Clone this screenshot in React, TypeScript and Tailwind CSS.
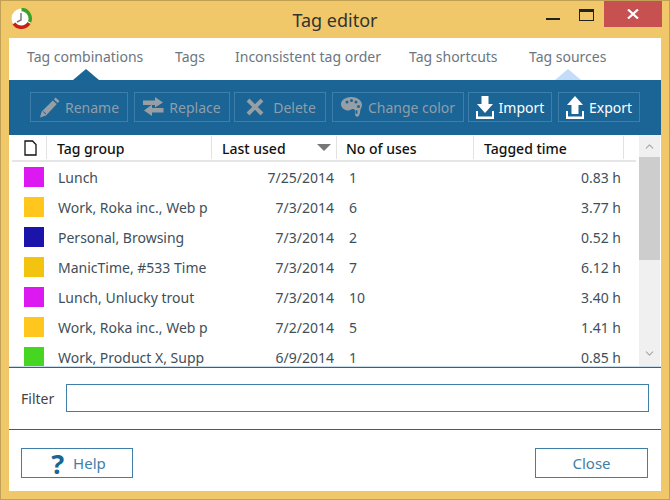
import { ReactNode } from 'react';
import { ChevronUp, ChevronDown } from 'lucide-react';

const rows = [
  { color: 'bg-[#dc19f0]', name: 'Lunch', date: '7/25/2014', uses: '1', time: '0.83 h' },
  { color: 'bg-[#ffc61e]', name: 'Work, Roka inc., Web p', date: '7/3/2014', uses: '6', time: '3.77 h' },
  { color: 'bg-[#1a14aa]', name: 'Personal, Browsing', date: '7/3/2014', uses: '2', time: '0.52 h' },
  { color: 'bg-[#f2c40f]', name: 'ManicTime, #533 Time', date: '7/3/2014', uses: '7', time: '6.12 h' },
  { color: 'bg-[#dc19f0]', name: 'Lunch, Unlucky trout', date: '7/3/2014', uses: '10', time: '3.40 h' },
  { color: 'bg-[#ffc61e]', name: 'Work, Roka inc., Web p', date: '7/2/2014', uses: '5', time: '1.41 h' },
  { color: 'bg-[#46d622]', name: 'Work, Product X, Supp', date: '6/9/2014', uses: '1', time: '0.85 h' },
];

const tabs = [
  { label: 'Tag combinations', cls: 'w-[148px] pl-[18px]' },
  { label: 'Tags', cls: 'w-[60px] pl-[18px]' },
  { label: 'Inconsistent tag order', cls: 'w-[174px] pl-[18px]' },
  { label: 'Tag shortcuts', cls: 'w-[120px] pl-[18px]' },
  { label: 'Tag sources', cls: 'w-[150px] pl-[18px]' },
];

function ToolButton({ icon, label, width, off }: { icon: ReactNode; label: string; width: string; off?: boolean }) {
  return (
    <div className={`${width} h-[30px] shrink-0 flex items-center justify-center gap-[5px] border border-[#3f7ea8] ${off ? 'text-[#8f9ea9]' : 'text-white'}`}>
      {icon}
      <span className="leading-none pt-[1px]">{label}</span>
    </div>
  );
}

const Pencil = (
  <svg width="21" height="21" viewBox="0 0 21 21" fill="#979fa4">
    <path d="M16.500 0.500l4 3.500-1.700 2-4-3.500zM13.800 3.500l4 3.500-10.800 11.500-6 2 1.700-6z" />
    <path d="M4 14.500l3 2.500" stroke="#1a6496" strokeWidth="1" fill="none" />
  </svg>
);
const ReplaceIcon = (
  <svg width="21" height="20" viewBox="0 0 21 20" fill="#979fa4">
    <path d="M0 3.500h12V0l8 5.500-8 5V8H0zM20.500 11H9V7.500L1 13.500l8 5.500v-3.500h11.500z" />
  </svg>
);
const XIcon = (
  <svg className="ml-[2px] mr-[4px]" width="18" height="18" viewBox="0 0 18 18" fill="none" stroke="#979fa4" strokeWidth="4">
    <path d="M2 2l14 14M16 2L2 16" />
  </svg>
);
const Palette = (
  <svg width="22" height="22" viewBox="0 0 22 22">
    <path fillRule="evenodd" fill="#979fa4" d="M10 1c6 0 11 3.500 11 8 0 2-1 3-1.500 4.500-.5 2-.5 6-2.500 7-2 .8-3-1-3-3 0-2 .5-4-1.500-4.500-2-.5-3 1.500-5 1.500C3.500 14.500 0 12 0 8c0-4 5-7 10-7zM6 4.500a1.500 1.500 0 100 3 1.500 1.500 0 000-3zM10.500 3a1.500 1.500 0 100 3 1.500 1.500 0 000-3zM15 4.500a1.500 1.500 0 100 3 1.500 1.500 0 000-3zM17.500 9a1.500 1.500 0 100 3 1.500 1.500 0 000-3zM15.500 14a1 1 0 00-1 1v2a1 1 0 002 0v-2a1 1 0 00-1-1z" />
  </svg>
);
const ImportIcon = (
  <svg width="18" height="23" viewBox="0 0 18 23" fill="white">
    <path d="M5.500 0h7v8H17l-8 9-8-9h4.500zM0 15h2v5.500h14V15h2v8H0z" />
  </svg>
);
const ExportIcon = (
  <svg width="18" height="23" viewBox="0 0 18 23" fill="white">
    <path d="M9 0l8 9h-4.500v9h-7V9H1zM0 15h2v5.500h14V15h2v8H0z" />
  </svg>
);

function AppIcon() {
  return (
    <svg width="21" height="21" viewBox="0 0 21 21">
      <circle cx="10.500" cy="10.500" r="10" fill="white" />
      <path d="M10.500 1.500a9 9 0 0 1 8 12.500" fill="none" stroke="#3aa028" strokeWidth="3.500" />
      <path d="M18 15a9 9 0 0 1-15 0.500" fill="none" stroke="#c81e14" strokeWidth="3.500" />
      <path d="M10 5v7l-4 2" fill="none" stroke="#777" strokeWidth="1.500" />
    </svg>
  );
}

export default function App() {
  return (
    <div className="w-[670px] h-[500px] overflow-hidden flex flex-col bg-[#f0c869] border border-[#bfa055] font-['Noto_Sans',sans-serif] text-[14px] text-[#3f4f5a]">
      <div className="h-[37px] shrink-0 flex items-start relative">
        <div className="absolute left-[10px] top-[7px]"><AppIcon /></div>
        <div className="flex-1 text-center text-[18px] leading-[37px] text-[#333] pt-[1px]">Tag editor</div>
        <div className="absolute left-[545px] top-[17px] w-[14px] h-[2px] bg-[#222]" />
        <div className="absolute left-[578px] top-[8px] w-[15px] h-[12px] border border-[#222] border-t-[3px]" />
        <div className="absolute left-[603px] top-0 w-[58px] h-[26px] bg-[#c75050] flex items-center justify-center">
          <svg width="12" height="10" viewBox="0 0 12 10" fill="none" stroke="white" strokeWidth="2.200">
            <path d="M1 0.500l10 9M11 0.500l-10 9" />
          </svg>
        </div>
      </div>

      <div className="mx-[8px] h-[453px] shrink-0 bg-white flex flex-col">
        <div className="h-[42px] shrink-0 flex items-start relative text-[#6b7680]">
          {tabs.map(t => (
            <div key={t.label} className={`${t.cls} pt-[8px] leading-[22px] shrink-0 whitespace-nowrap`}>{t.label}</div>
          ))}
          <div className="absolute left-[64px] top-[31px] w-0 h-0 border-x-[13px] border-x-transparent border-b-[11px] border-b-[#1a6496]" />
          <div className="absolute left-[546px] top-[31px] w-0 h-0 border-x-[13px] border-x-transparent border-b-[11px] border-b-[#c5dcf8]" />
        </div>

        <div className="h-[55px] shrink-0 bg-[#1a6496] flex items-start pt-[12px] pl-[21px] gap-[6px]">
          <ToolButton off icon={Pencil} label="Rename" width="w-[98px]" />
          <ToolButton off icon={ReplaceIcon} label="Replace" width="w-[96px]" />
          <ToolButton off icon={XIcon} label="Delete" width="w-[92px] -ml-[2px]" />
          <ToolButton off icon={Palette} label="Change color" width="w-[132px]" />
          <ToolButton icon={ImportIcon} label="Import" width="w-[84px] -ml-[2px]" />
          <ToolButton icon={ExportIcon} label="Export" width="w-[82px]" />
        </div>

        <div className="h-[231px] shrink-0 flex overflow-hidden">
          <div className="w-[630px] shrink-0">
            <div className="h-[27px] flex border-b-2 border-[#e6e6e6] text-[#111] font-medium ml-[3px] mr-[3px]">
              <div className="w-[35px] flex items-center pl-[12px] border-r border-[#e2e2e2] my-[1px]">
                <svg width="13" height="16" viewBox="0 0 13 16" fill="white" stroke="#111" strokeWidth="1.300">
                  <path d="M1 1h7.500L12 4.500V15H1z" />
                </svg>
              </div>
              <div className="w-[165px] pl-[10px] leading-[25px] border-r border-[#e2e2e2] my-[1px]">Tag group</div>
              <div className="w-[125px] pl-[10px] leading-[25px] border-r border-[#e2e2e2] my-[1px] relative">
                Last used
                <div className="absolute right-[5px] top-[8px] w-0 h-0 border-x-[7px] border-x-transparent border-t-[7px] border-t-[#777]" />
              </div>
              <div className="w-[137px] pl-[9px] leading-[25px] border-r border-[#e2e2e2] my-[1px]">No of uses</div>
              <div className="w-[150px] pl-[10px] leading-[25px] border-r border-[#e2e2e2] my-[1px]">Tagged time</div>
            </div>
            {rows.map((r, i) => (
              <div key={i} className="h-[30px] flex items-center">
                <div className={`${r.color} w-[20px] h-[20px] ml-[15px] shrink-0`} />
                <div className="w-[150px] ml-[14px] overflow-hidden whitespace-nowrap shrink-0">{r.name}</div>
                <div className="w-[126px] text-right shrink-0">{r.date}</div>
                <div className="w-[60px] ml-[15px] shrink-0">{r.uses}</div>
                <div className="w-[212px] text-right shrink-0">{r.time}</div>
              </div>
            ))}
          </div>
          <div className="w-[21px] shrink-0 bg-[#f0f0f0] flex flex-col items-center text-[#a6a6a6]">
            <div className="h-[22px] w-full flex items-center justify-center"><ChevronUp size={13} strokeWidth={2} /></div>
            <div className="h-[103px] w-full bg-[#cdcdcd]" />
            <div className="flex-1" />
            <div className="h-[25px] w-full flex items-center justify-center"><ChevronDown size={13} strokeWidth={2} /></div>
          </div>
        </div>

        <div className="h-[1px] shrink-0 bg-[#c8dbe8]" />
        <div className="h-[63px] shrink-0 border-t border-t-[#2a6490] border-b border-b-[#2a6490] flex items-center pl-[12px] pr-[12px] pb-[1px]">
          <span className="w-[45px] shrink-0 text-[#444]">Filter</span>
          <div className="flex-1 h-[28px] border border-[#3f7ea8]" />
        </div>

        <div className="flex-1 flex items-start justify-between pt-[18px] pl-[12px] pr-[13px]">
          <div className="w-[112px] h-[30px] border border-[#3f7ea8] flex items-center justify-center gap-[9px] pl-[3px] text-[#3f7ea8]">
            <span className="text-[27px] leading-none font-bold text-[#1a6496]">?</span>
            <span className="text-[15px]">Help</span>
          </div>
          <div className="w-[113px] h-[30px] border border-[#3f7ea8] flex items-center justify-center text-[15px] text-[#3f7ea8]">Close</div>
        </div>
      </div>
    </div>
  );
}
